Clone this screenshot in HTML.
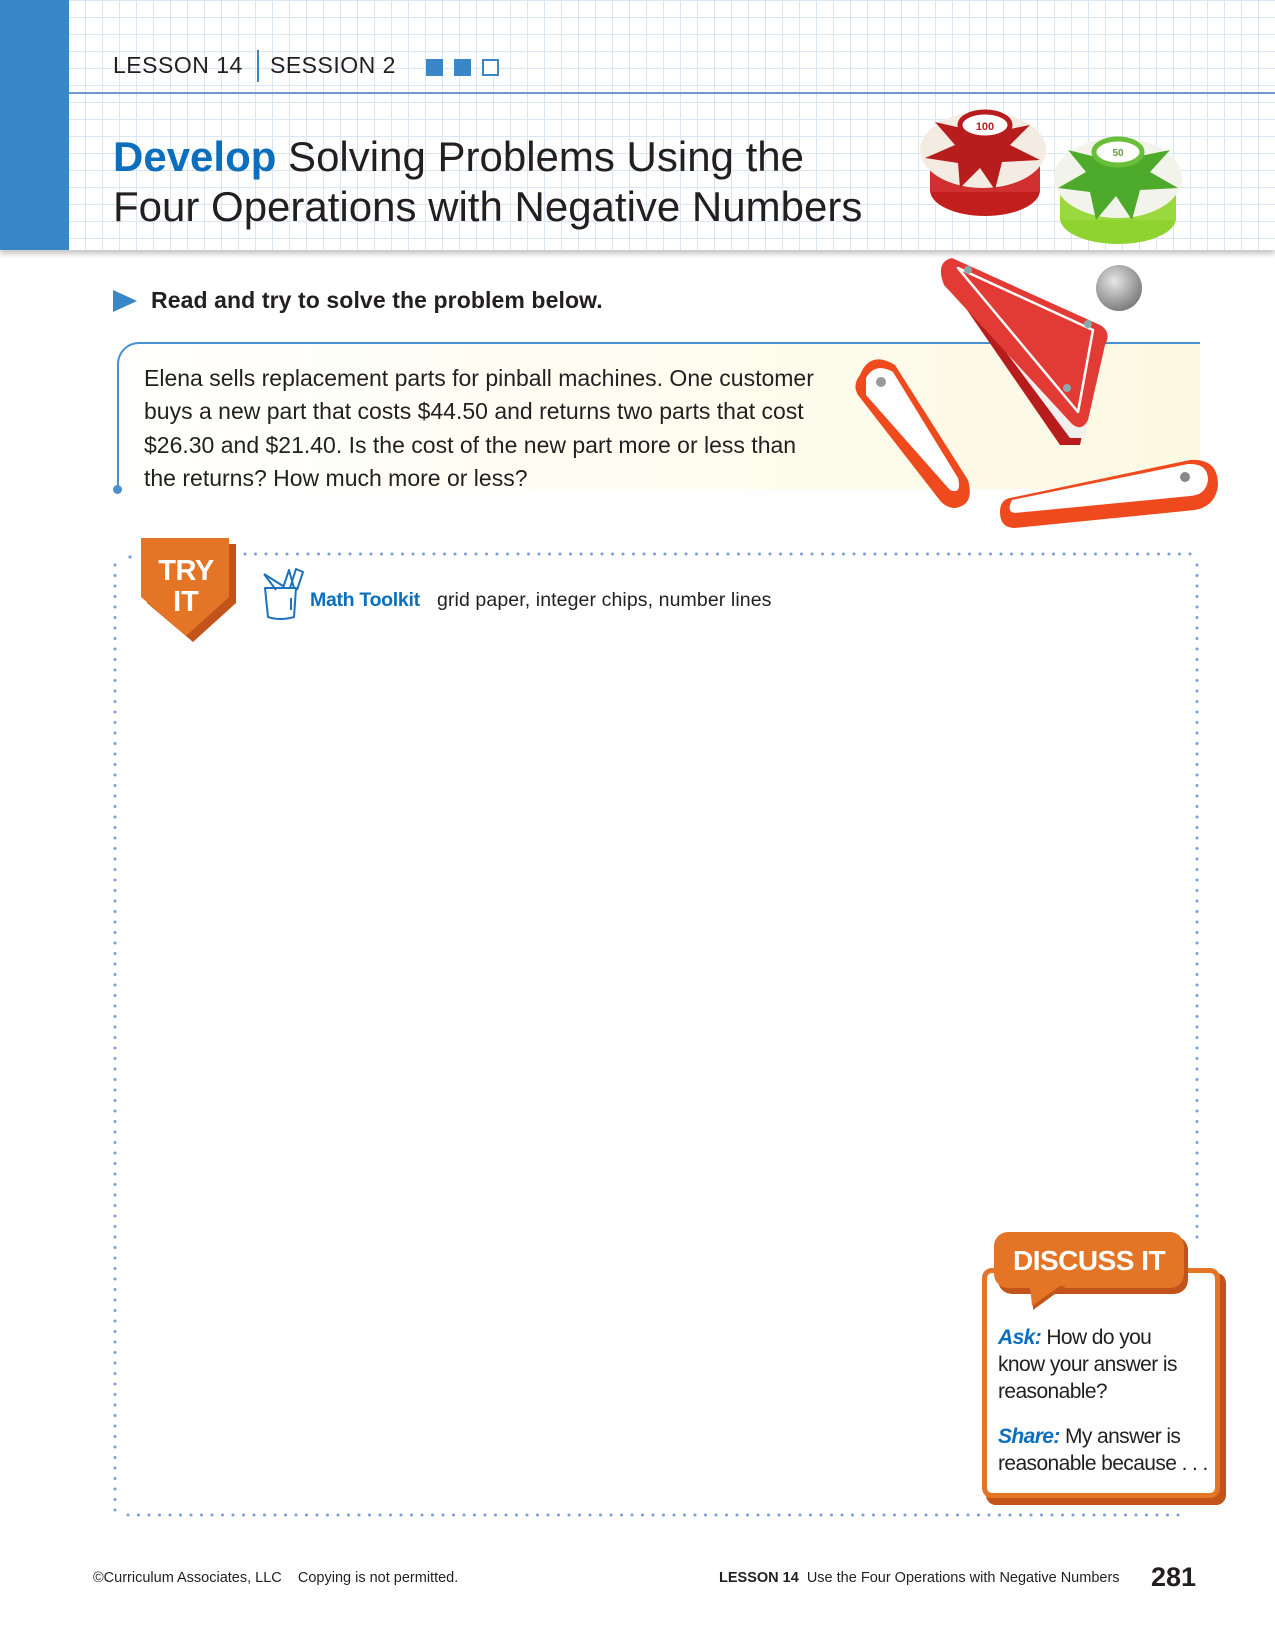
<!DOCTYPE html>
<html><head><meta charset="utf-8"><style>
*{margin:0;padding:0;box-sizing:border-box}
body{width:1275px;height:1632px;position:relative;background:#fff;font-family:"Liberation Sans",sans-serif;overflow:hidden;color:#231f20}
.abs{position:absolute;white-space:nowrap}
#hdr{position:absolute;left:0;top:0;width:1275px;height:250px;background-color:#fff;
background-image:linear-gradient(#dbe6f4 1px,transparent 1px),linear-gradient(90deg,#dbe6f4 1px,transparent 1px);
background-size:17px 17px;box-shadow:0 4px 5px rgba(0,0,0,.22)}
#bar{position:absolute;left:0;top:0;width:69px;height:250px;background:#3a87c8}
</style></head><body>
<div id="hdr"></div>
<div id="bar"></div>
<div class="abs" style="left:69px;top:92px;width:1206px;height:2px;background:#6f9bd1"></div>
<div class="abs" style="left:113px;top:52px;font-size:23px;letter-spacing:0.5px;color:#231f20">LESSON 14</div>
<div class="abs" style="left:257px;top:50px;width:2px;height:32px;background:#3a87c8"></div>
<div class="abs" style="left:270px;top:52px;font-size:23px;letter-spacing:0.5px">SESSION 2</div>
<div class="abs" style="left:426px;top:59px;width:17px;height:17px;background:#3a87c8"></div>
<div class="abs" style="left:454px;top:59px;width:17px;height:17px;background:#3a87c8"></div>
<div class="abs" style="left:482px;top:59px;width:17px;height:17px;border:2px solid #3a87c8;background:#fff"></div>
<div class="abs" style="left:113px;top:132px;font-size:42px;line-height:50px;letter-spacing:0px"><b style="color:#0c6fbe">Develop</b> Solving Problems Using the<br>Four Operations with Negative Numbers</div>

<div class="abs" style="left:113px;top:290px;width:0;height:0;border-left:24px solid #3a87c8;border-top:11px solid transparent;border-bottom:11px solid transparent"></div>
<div class="abs" style="left:151px;top:287px;font-size:23px;font-weight:bold;letter-spacing:0.1px">Read and try to solve the problem below.</div>

<div class="abs" style="left:117px;top:342px;width:1083px;height:147px;border-top:2px solid #4a8fd0;border-left:2px solid #4a8fd0;border-top-left-radius:22px;background:linear-gradient(90deg,#fff 0%,#fefdf2 40%,#fcf9e2 100%)"></div>
<div class="abs" style="left:113px;top:485px;width:9px;height:9px;border-radius:50%;background:#4a8fd0"></div>
<div class="abs" style="left:144px;top:362px;font-size:23px;line-height:33.3px;letter-spacing:0px">Elena sells replacement parts for pinball machines. One customer<br>buys a new part that costs $44.50 and returns two parts that cost<br>$26.30 and $21.40. Is the cost of the new part more or less than<br>the returns? How much more or less?</div>

<svg class="abs" style="left:0;top:0" width="1275" height="1632" viewBox="0 0 1275 1632">
<defs>
<radialGradient id="ball" cx="0.4" cy="0.35" r="0.7"><stop offset="0" stop-color="#e6e6e6"/><stop offset="1" stop-color="#777"/></radialGradient>
</defs>
<ellipse cx="985" cy="190" rx="55" ry="26" fill="#c21e1e"/>
<rect x="930" y="160" width="110" height="32" fill="#d13030"/>
<ellipse cx="983" cy="150" rx="63" ry="38" fill="#f4ece2"/>
<polygon points="983,115 995,132 1030,125 1010,145 1040,160 1002,162 995,190 980,168 960,188 958,163 925,158 955,145 935,122 970,130" fill="#b81d1d"/>
<ellipse cx="985" cy="125" rx="25" ry="13" fill="#fff" stroke="#b81d1d" stroke-width="5"/>
<text x="985" y="130" font-size="11" font-family="Liberation Sans" font-weight="bold" fill="#b81d1d" text-anchor="middle">100</text>
<ellipse cx="1118" cy="218" rx="58" ry="26" fill="#8fd331"/>
<rect x="1060" y="190" width="116" height="30" fill="#9ad93e"/>
<ellipse cx="1118" cy="178" rx="64" ry="40" fill="#f2f3ea"/>
<polygon points="1116,140 1130,158 1170,150 1150,172 1178,188 1140,190 1132,220 1116,196 1096,220 1090,192 1058,188 1086,172 1068,150 1100,158" fill="#4eaa2a"/>
<ellipse cx="1118" cy="152" rx="24" ry="13" fill="#fff" stroke="#6abf3a" stroke-width="5"/>
<text x="1118" y="156" font-size="10" font-family="Liberation Sans" font-weight="bold" fill="#6a9a3a" text-anchor="middle">50</text>
<polygon points="945,278 1100,348 1080,445 1060,445" fill="#b81d1d"/>
<polygon points="945,270 1100,340 1085,438 1070,438" fill="#f2f0ee"/>
<path d="M952,258 L1100,325 Q1112,332 1105,345 L1088,420 Q1082,432 1072,424 L944,285 Q935,262 952,258Z" fill="#e23a34"/>
<path d="M958,268 L1093,330 L1078,412 Z" fill="none" stroke="#fff" stroke-width="2.5" stroke-linejoin="round"/>
<circle cx="968" cy="270" r="4" fill="#8aa"/><circle cx="1088" cy="324" r="4" fill="#8aa"/><circle cx="1067" cy="388" r="4" fill="#8aa"/>
<circle cx="1119" cy="288" r="23" fill="url(#ball)"/>
<path d="M860,375 Q870,350 895,365 L968,480 Q975,505 955,508 Q945,508 938,498 L858,395 Q852,385 860,375Z" fill="#ef4a1e"/>
<path d="M866,378 Q875,362 893,372 L958,478 Q962,495 950,490 L866,395Z" fill="#fff"/>
<circle cx="881" cy="382" r="5" fill="#999"/>
<path d="M1010,498 L1190,460 Q1218,458 1218,485 Q1216,506 1195,510 L1015,528 Q1000,528 1000,512 Q1000,500 1010,498Z" fill="#ef4a1e"/>
<path d="M1012,500 L1188,464 Q1208,463 1208,480 Q1206,495 1190,496 L1015,513 Q1006,512 1012,500Z" fill="#fff"/>
<circle cx="1185" cy="477" r="5" fill="#888"/>
<line x1="245" y1="554" x2="1197" y2="554" stroke="#7a9fd8" stroke-width="3" stroke-linecap="round" stroke-dasharray="0 10.5"/>
<line x1="115" y1="565" x2="115" y2="1515" stroke="#7a9fd8" stroke-width="3" stroke-linecap="round" stroke-dasharray="0 10.5"/>
<line x1="1197" y1="565" x2="1197" y2="1240" stroke="#7a9fd8" stroke-width="3" stroke-linecap="round" stroke-dasharray="0 10.5"/>
<line x1="128" y1="1515" x2="1185" y2="1515" stroke="#7a9fd8" stroke-width="3" stroke-linecap="round" stroke-dasharray="0 10.5"/>
<circle cx="130" cy="557" r="1.6" fill="#7a9fd8"/>
<polygon points="147,544 236,544 236,603 193,642 147,603" fill="#c2531b"/>
<polygon points="141,538 229,538 229,597 186,636 141,597" fill="#e57526"/>
<text x="186" y="580" font-size="29" font-weight="bold" fill="#fff" text-anchor="middle" font-family="Liberation Sans" letter-spacing="-0.5">TRY</text>
<text x="186" y="611" font-size="29" font-weight="bold" fill="#fff" text-anchor="middle" font-family="Liberation Sans">IT</text>
<g fill="none" stroke="#1c72bb" stroke-width="2" stroke-linejoin="round">
<path d="M265,588 L296,588 L294,617 Q280,621 268,617Z"/>
<path d="M264,574 L276,590 M264,574 L283,586"/>
<path d="M283,588 L289,570 L294,588"/>
<path d="M290,588 L296,569 L303,572 L297,590"/>
<line x1="291" y1="598" x2="291" y2="610"/>
</g>
</svg>
<div class="abs" style="left:310px;top:589px;font-size:19.5px;color:#0c6fbe;font-weight:bold;letter-spacing:-0.3px">Math Toolkit</div>
<div class="abs" style="left:437px;top:589px;font-size:19.5px;letter-spacing:0.1px">grid paper, integer chips, number lines</div>

<div class="abs" style="left:986px;top:1273px;width:240px;height:232px;border-radius:10px;background:#c2531b"></div>
<div class="abs" style="left:982px;top:1268px;width:238px;height:230px;border:5px solid #e57526;border-radius:10px;background:#fff"></div>
<div class="abs" style="left:998px;top:1236px;width:190px;height:58px;border-radius:14px;background:#c2531b"></div>
<div class="abs" style="left:994px;top:1232px;width:190px;height:56px;border-radius:14px;background:#e57526"></div>
<svg class="abs" style="left:1030px;top:1286px" width="40" height="26"><polygon points="3,0 36,0 3,24" fill="#c2531b"/><polygon points="0,0 30,0 2,20" fill="#e57526"/></svg>
<div class="abs" style="left:1013px;top:1245px;font-size:28px;font-weight:bold;color:#fff;letter-spacing:-0.5px">DISCUSS IT</div>
<div class="abs" style="left:998px;top:1324px;font-size:21px;line-height:27px;letter-spacing:-0.6px"><b style="color:#0c6fbe;font-style:italic">Ask:</b> How do you<br>know your answer is<br>reasonable?</div>
<div class="abs" style="left:998px;top:1423px;font-size:21px;line-height:27px;letter-spacing:-0.6px"><b style="color:#0c6fbe;font-style:italic">Share:</b> My answer is<br>reasonable because . . .</div>

<div class="abs" style="left:93px;top:1570px;font-size:14.5px;letter-spacing:0px">©Curriculum Associates, LLC &nbsp;&nbsp; Copying is not permitted.</div>
<div class="abs" style="left:719px;top:1570px;font-size:14.5px;letter-spacing:0px"><b>LESSON 14</b>&nbsp; Use the Four Operations with Negative Numbers</div>
<div class="abs" style="left:1151px;top:1562px;font-size:27px;font-weight:bold">281</div>
</body></html>
